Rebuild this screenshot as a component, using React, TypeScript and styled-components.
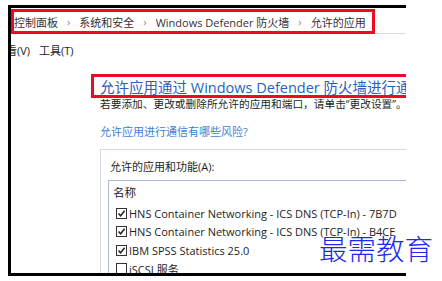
import React from "react";
import styled, { createGlobalStyle } from "styled-components";

const GlobalStyle = createGlobalStyle`
  html, body {
    margin: 0;
    padding: 0;
    background: #fff;
    overflow: hidden;
    font-family: "Open Sans", "Noto Sans CJK SC", sans-serif;
    color: #1e1e1e;
  }
`;

const Frame = styled.div`
  width: 395px;
  height: 265px;
  margin: 5px 0 0 8px;
  border-top: 3px solid #000;
  border-left: 3px solid #000;
  border-bottom: 3px solid #000;
  overflow: hidden;
`;

const AddressBar = styled.div`
  height: 26px;
  box-sizing: border-box;
  border-bottom: 1px solid #dadada;
  display: flex;
  align-items: flex-start;
`;

const Crumbs = styled.div`
  margin-top: 1px;
  width: 364px;
  height: 25px;
  box-sizing: border-box;
  border: 3px solid #ee0a24;
  display: flex;
  align-items: center;
  font-size: 11px;
  color: #333;
  white-space: nowrap;
`;

const Sep = styled.span`
  margin: 0 9px;
  color: #8a8a8a;
`;

const MenuBar = styled.div`
  height: 32px;
  margin-left: -16px;
  display: flex;
  align-items: center;
  gap: 9px;
  font-size: 11px;
  color: #222;
  white-space: nowrap;
`;

const Content = styled.div`
  padding-left: 80px;
  margin-top: 8px;
`;

const HeadingBox = styled.div`
  width: 340px;
  height: 24px;
  box-sizing: border-box;
  border: 3px solid #ee0a24;
  padding-left: 6px;
  display: flex;
  align-items: center;
  font-size: 14.5px;
  color: #2a5fbd;
  white-space: nowrap;
`;

const Desc = styled.div`
  padding-left: 9px;
  font-size: 10.7px;
  line-height: 12px;
  white-space: nowrap;
`;

const RiskLink = styled.div`
  margin-top: 15px;
  padding-left: 9px;
  font-size: 11px;
  line-height: 14px;
  color: #3b7fd4;
  white-space: nowrap;
`;

const Panel = styled.div`
  margin-top: 10px;
  margin-left: 9px;
  width: 400px;
  height: 140px;
  padding: 10px 0 0 7px;
  border: 1px solid #d3d8e4;
`;

const PanelLabel = styled.div`
  padding-left: 2px;
  font-size: 11px;
  line-height: 14px;
  white-space: nowrap;
`;

const ListBox = styled.div`
  margin-top: 6px;
  height: 200px;
  border: 1px solid #a9b7d8;
`;

const ListHeader = styled.div`
  height: 23px;
  line-height: 23px;
  padding-left: 4px;
  font-size: 11.5px;
`;

const Row = styled.div`
  height: 18.5px;
  display: flex;
  align-items: center;
  gap: 2px;
  padding-left: 7px;
  font-size: 11px;
  white-space: nowrap;
`;

const Box = styled.span`
  width: 11px;
  height: 11px;
  box-sizing: border-box;
  border: 1px solid #333;
  background: #fff;
  display: inline-flex;
  align-items: center;
  justify-content: center;
  flex-shrink: 0;
`;

const Watermark = styled.div`
  position: absolute;
  left: 319px;
  top: 234px;
  font-family: "Noto Sans CJK SC", sans-serif;
  font-size: 28.5px;
  font-weight: 300;
  line-height: 1;
  color: #1d2ae8;
  white-space: nowrap;
`;

function CheckBox({ checked }: { checked: boolean }) {
  return (
    <Box>
      {checked && (
        <svg width="9" height="9" viewBox="0 0 9 9">
          <path d="M1.5 4.5 L3.6 6.8 L7.6 1.8" fill="none" stroke="#222" strokeWidth="1.5" />
        </svg>
      )}
    </Box>
  );
}

const apps = [
  { name: "HNS Container Networking - ICS DNS (TCP-In) - 7B7D", checked: true },
  { name: "HNS Container Networking - ICS DNS (TCP-In) - B4CE", checked: true },
  { name: "IBM SPSS Statistics 25.0", checked: true },
  { name: "iSCSI 服务", checked: false },
];

const crumbs = ["控制面板", "系统和安全", "Windows Defender 防火墙", "允许的应用"];

export default function App() {
  return (
    <>
      <GlobalStyle />
      <Frame>
        <AddressBar>
          <Crumbs>
            {crumbs.map((c, i) => (
              <React.Fragment key={c}>
                {i > 0 && <Sep>›</Sep>}
                <span>{c}</span>
              </React.Fragment>
            ))}
          </Crumbs>
        </AddressBar>
        <MenuBar>
          <span>查看(V)</span>
          <span>工具(T)</span>
        </MenuBar>
        <Content>
          <HeadingBox>允许应用通过 Windows Defender 防火墙进行通信</HeadingBox>
          <Desc>若要添加、更改或删除所允许的应用和端口，请单击“更改设置”。</Desc>
          <RiskLink>允许应用进行通信有哪些风险?</RiskLink>
          <Panel>
            <PanelLabel>允许的应用和功能(A):</PanelLabel>
            <ListBox>
              <ListHeader>名称</ListHeader>
              {apps.map((a) => (
                <Row key={a.name}>
                  <CheckBox checked={a.checked} />
                  <span>{a.name}</span>
                </Row>
              ))}
            </ListBox>
          </Panel>
        </Content>
      </Frame>
      <Watermark>最需教育</Watermark>
    </>
  );
}
